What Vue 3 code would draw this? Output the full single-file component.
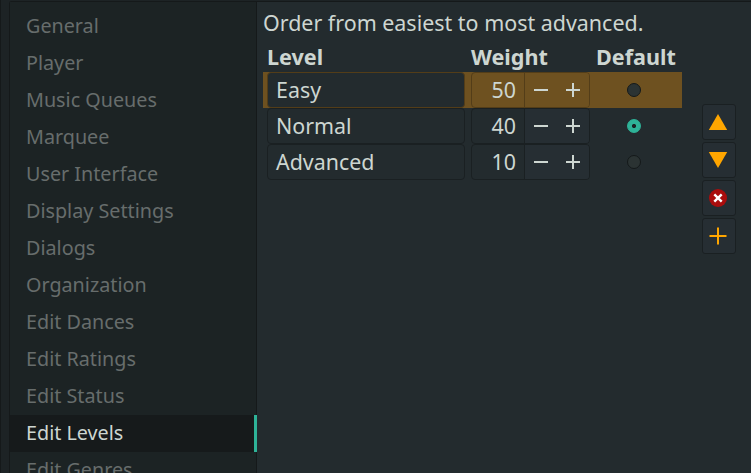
<script setup>
import { ref } from 'vue'

const sections = ['General', 'Player', 'Music Queues', 'Marquee', 'User Interface', 'Display Settings', 'Dialogs', 'Organization', 'Edit Dances', 'Edit Ratings', 'Edit Status', 'Edit Levels', 'Edit Genres']
const active = ref('Edit Levels')
const levels = ref([
  { name: 'Easy', weight: 50 },
  { name: 'Normal', weight: 40 },
  { name: 'Advanced', weight: 10 },
])
const selected = ref(0)
const defaultLevel = ref(1)
</script>

<template>
  <div class="window">
    <div class="notebook">
      <nav class="tabs">
        <div v-for="s in sections" :key="s" class="tab" :class="{ active: s === active }" @click="active = s">{{ s }}</div>
      </nav>
      <main class="page">
        <p class="hint">Order from easiest to most advanced.</p>
        <div class="body">
          <div class="table">
            <div class="row head">
              <span class="title">Level</span>
              <span class="title">Weight</span>
              <span class="title">Default</span>
            </div>
            <div v-for="(l, i) in levels" :key="l.name" class="row" :class="{ selected: i === selected }" @click="selected = i">
              <div class="entry">{{ l.name }}</div>
              <div class="spin">
                <span class="value">{{ l.weight }}</span>
                <span class="steps">
                  <svg width="64" height="34" viewBox="0 0 64 34">
                    <path d="M9 16h14v2H9zM41 16h14v2H41zM47 10h2v14h-2z" fill="#cdd6d1" />
                  </svg>
                </span>
              </div>
              <div class="choice"><span class="radio" :class="{ on: i === defaultLevel }"></span></div>
            </div>
          </div>
          <div class="actions">
            <button class="action"><svg width="32" height="34" viewBox="0 0 32 34"><path d="M15 9l9.200 16H5.800z" fill="#ffa600" /></svg></button>
            <button class="action"><svg width="32" height="34" viewBox="0 0 32 34"><path d="M15 25l9.200-16H5.800z" fill="#ffa600" /></svg></button>
            <button class="action"><svg width="32" height="34" viewBox="0 0 32 34"><circle cx="15" cy="17" r="9" fill="#aa0d0d" /><path d="M11.300 13.300l7.400 7.400m0-7.400l-7.400 7.400" stroke="#fff" stroke-width="2.400" /></svg></button>
            <button class="action"><svg width="32" height="34" viewBox="0 0 32 34"><path d="M6.500 17h17M15 8.500v17" stroke="#ffa600" stroke-width="2" /></svg></button>
          </div>
        </div>
      </main>
    </div>
  </div>
</template>

<style>
body { background: #1d2325; overflow: hidden; }
</style>
<style scoped>
* { box-sizing: border-box; }
.window { width: 751px; height: 473px; overflow: hidden; padding: 1px 0 0 8px; border-left: 1px solid #15191a; background: #1d2325; font-family: "Noto Sans", sans-serif; font-size: 21.400px; color: #cdd6d1; }
.notebook { display: flex; height: 480px; border: 1px solid #15191a; border-right: 0; border-top-left-radius: 3px; }
.tabs { width: 247px; flex: none; padding-top: 6px; background: #1c2324; border-right: 1px solid #15191a; }
.tab { height: 37px; line-height: 36px; padding-left: 16px; font-size: 19.750px; color: #676d6c; }
.tab.active { margin-right: -1px; background: #161a1b; border-right: 3px solid #2eb398; color: #cdd6d1; position: relative; }
.page { flex: 1; background: #232b2e; padding: 6px 15px 0 6px; }
.hint { margin: 0; height: 30px; line-height: 30px; font-size: 21.450px; white-space: nowrap; }
.body { display: flex; justify-content: space-between; }
.table { width: 419px; padding-top: 2px; }
.row { display: grid; grid-template-columns: 198px 119px 88px; column-gap: 6px; height: 36px; padding-left: 4px; }
.head { height: 32px; line-height: 34px; font-weight: bold; font-size: 21.600px; }
.entry, .spin { height: 36px; border: 1px solid #1a2022; border-radius: 4px; background: #232b2e; }
.entry { padding-left: 8px; line-height: 33px; }
.spin { display: flex; }
.value { width: 53px; padding-right: 8px; text-align: right; line-height: 33px; border-right: 1px solid #1a2022; }
.steps { flex: 1; background: #262e33; border-radius: 0 3px 3px 0; }
.steps svg { display: block; }
.selected { background: #6e5120; }
.selected .entry, .selected .spin, .selected .value { border-color: #533d18; }
.selected .spin, .selected .steps { background: #6e5120; }
.choice { display: flex; align-items: center; padding-left: 31px; }
.radio { width: 14px; height: 14px; border: 1px solid #14191a; border-radius: 50%; background: #2b3333; }
.radio.on { border-color: #2eb398; background: radial-gradient(circle, #1b2224 1.700px, #2eb398 2.400px); }
.actions { padding-top: 66px; display: flex; flex-direction: column; gap: 2px; }
.action { display: block; width: 34px; height: 36px; padding: 0; border: 1px solid #1a2022; border-radius: 3px; background: #262e33; }
.action svg { display: block; }
</style>
